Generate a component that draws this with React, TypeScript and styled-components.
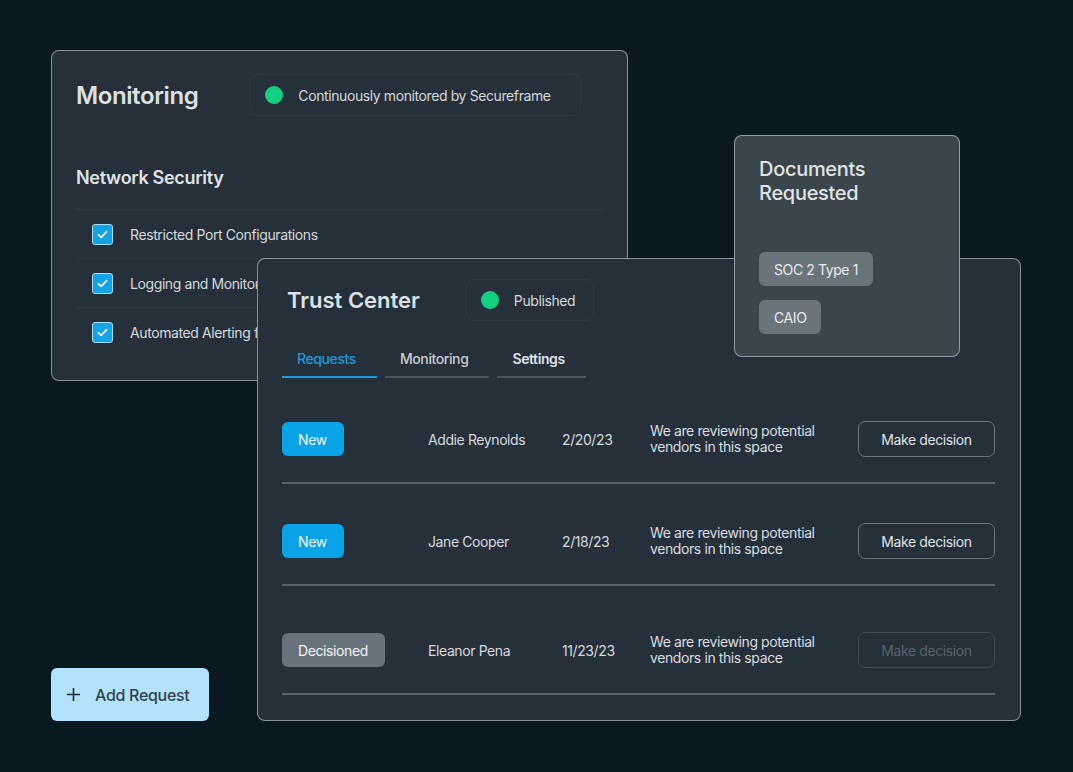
import React from "react";
import styled, { createGlobalStyle } from "styled-components";

const Global = createGlobalStyle`
  html, body { margin: 0; padding: 0; background: #0a1820; }
  body { font-family: Inter, "Noto Sans", "Liberation Sans", sans-serif; -webkit-font-smoothing: antialiased; }
  * { box-sizing: border-box; }
`;

const Canvas = styled.div`
  position: relative;
  width: 1073px;
  height: 772px;
  overflow: hidden;
  background: #0a1820;
  letter-spacing: -0.4px;
`;

const Window = styled.section<{ $x: number; $y: number; $w: number; $h: number; $bg?: string }>`
  position: absolute;
  left: ${(p) => p.$x}px;
  top: ${(p) => p.$y}px;
  width: ${(p) => p.$w}px;
  height: ${(p) => p.$h}px;
  background: ${(p) => p.$bg ?? "#25303a"};
  border: 1px solid rgba(220, 228, 232, 0.55);
  border-radius: 8px;
  display: flex;
  flex-direction: column;
`;

/* ---------- Monitoring ---------- */
const MonitorBody = styled.div`
  display: flex;
  flex-direction: column;
  padding: 24px 24px 0 24px;
`;

const HeaderRow = styled.div<{ $gap: number }>`
  display: flex;
  align-items: center;
  gap: ${(p) => p.$gap}px;
  height: 40px;
`;

const Title = styled.h1<{ $size: number; $track: number }>`
  margin: 0;
  font-size: ${(p) => p.$size}px;
  font-weight: 600;
  letter-spacing: ${(p) => p.$track}px;
  color: #dde1e4;
`;

const StatusPill = styled.div<{ $w: number }>`
  display: flex;
  align-items: center;
  gap: 15px;
  width: ${(p) => p.$w}px;
  height: 42px;
  padding: 0 14px;
  border: 1px solid rgba(255, 255, 255, 0.035);
  border-radius: 8px;
  font-size: 14px;
  color: #d3d8db;
`;

const Dot = styled.span`
  width: 18px;
  height: 18px;
  border-radius: 50%;
  background: #12cf82;
  flex: none;
`;

const SectionTitle = styled.h2`
  margin: 52px 0 0 0;
  font-size: 18px;
  line-height: 22px;
  font-weight: 600;
  letter-spacing: -0.3px;
  color: #dfe3e6;
`;

const CheckList = styled.ul`
  list-style: none;
  margin: 20px 0 0 0;
  padding: 0;
`;

const CheckRow = styled.li`
  display: flex;
  align-items: center;
  gap: 17px;
  height: 49px;
  padding-left: 16px;
  border-top: 1px solid rgba(255, 255, 255, 0.035);
  font-size: 14px;
  color: #d6dadd;
`;

const Box = styled.span`
  width: 21px;
  height: 21px;
  border-radius: 3px;
  background: #14a3e6;
  border: 1px solid #a9dcf5;
  display: flex;
  align-items: center;
  justify-content: center;
  flex: none;
`;

/* ---------- Trust Center ---------- */
const TrustBody = styled.div`
  display: flex;
  flex-direction: column;
  padding: 0 25px 0 24px;
`;

const TrustHeader = styled(HeaderRow)`
  margin-top: 21px;
  padding-left: 5px;
`;

const Tabs = styled.nav`
  display: flex;
  gap: 8px;
  margin-top: 20px;
`;

const Tab = styled.div<{ $active?: boolean; $strong?: boolean }>`
  padding: 0 21px 0 15px;
  height: 38px;
  display: flex;
  align-items: center;
  font-size: 14px;
  font-weight: ${(p) => (p.$strong ? 600 : 500)};
  color: ${(p) => (p.$active ? "#1d9bd8" : p.$strong ? "#dfe3e6" : "#c9ced2")};
  border-bottom: 2px solid ${(p) => (p.$active ? "#1d9bd8" : "#4b555d")};
`;

const Row = styled.div<{ $top: number }>`
  display: grid;
  grid-template-columns: 146px 134px 88px 208px 137px;
  align-items: center;
  padding: ${(p) => p.$top}px 0 25px 0;
  border-bottom: 2px solid #58626a;
  font-size: 14px;
  color: #d6dadd;
`;

const Badge = styled.span<{ $tone: "new" | "done" }>`
  justify-self: start;
  height: 34px;
  padding: 0 17px 0 16px;
  display: flex;
  align-items: center;
  border-radius: 6px;
  font-size: 14px;
  color: #f2f6f8;
  background: ${(p) => (p.$tone === "new" ? "#0aa3e8" : "#69737b")};
`;

const Cell = styled.span`
  white-space: nowrap;
`;

const Desc = styled.span`
  line-height: 16px;
  color: #d9dde0;
`;

const DecisionButton = styled.button<{ $disabled?: boolean }>`
  height: 36px;
  border-radius: 7px;
  background: transparent;
  border: 1px solid ${(p) => (p.$disabled ? "#3e4951" : "#6a747c")};
  color: ${(p) => (p.$disabled ? "#59636b" : "#dfe3e6")};
  font-family: inherit;
  font-size: 14px;
  letter-spacing: -0.4px;
  padding: 0;
`;

/* ---------- Documents ---------- */
const DocBody = styled.div`
  display: flex;
  flex-direction: column;
  align-items: flex-start;
  padding: 21px 24px 0 24px;
`;

const DocTitle = styled.h3`
  margin: 0;
  font-size: 20px;
  line-height: 24px;
  font-weight: 500;
  letter-spacing: -0.3px;
  color: #dfe3e5;
`;

const Chips = styled.div`
  display: flex;
  flex-direction: column;
  align-items: flex-start;
  gap: 14px;
  margin-top: 47px;
`;

const Chip = styled.span`
  height: 34px;
  padding: 0 15px;
  display: flex;
  align-items: center;
  border-radius: 6px;
  background: #6a747b;
  color: #e9ecee;
  font-size: 14px;
`;

/* ---------- Add request ---------- */
const AddButton = styled.button`
  position: absolute;
  left: 51px;
  top: 668px;
  width: 158px;
  height: 53px;
  border: none;
  border-radius: 6px;
  background: #b3e3fc;
  display: flex;
  align-items: center;
  gap: 14px;
  padding: 0 0 0 15px;
  font-family: inherit;
  font-size: 16px;
  font-weight: 500;
  letter-spacing: -0.3px;
  color: #33434d;
`;

const Check = () => (
  <svg width="13" height="13" viewBox="0 0 13 13" fill="none">
    <path d="M2.5 6.8 L5.2 9.4 L10.6 3.6" stroke="#fff" strokeWidth="1.6" strokeLinecap="round" strokeLinejoin="round" />
  </svg>
);

const Plus = () => (
  <svg width="15" height="15" viewBox="0 0 15 15" fill="none">
    <path d="M7.5 1 V14 M1 7.5 H14" stroke="#1c2a33" strokeWidth="1.6" />
  </svg>
);

const checks = ["Restricted Port Configurations", "Logging and Monitoring", "Automated Alerting for Anomalies"];

const requests = [
  { status: "New", tone: "new" as const, name: "Addie Reynolds", date: "2/20/23", top: 43, disabled: false },
  { status: "New", tone: "new" as const, name: "Jane Cooper", date: "2/18/23", top: 39, disabled: false },
  { status: "Decisioned", tone: "done" as const, name: "Eleanor Pena", date: "11/23/23", top: 46, disabled: true },
];

export default function App() {
  return (
    <>
      <Global />
      <Canvas>
        <Window $x={51} $y={50} $w={577} $h={331}>
          <MonitorBody>
            <HeaderRow $gap={52}>
              <Title $size={24} $track={-0.4}>Monitoring</Title>
              <StatusPill $w={331}>
                <Dot />
                Continuously monitored by Secureframe
              </StatusPill>
            </HeaderRow>
            <SectionTitle>Network Security</SectionTitle>
            <CheckList>
              {checks.map((c) => (
                <CheckRow key={c}>
                  <Box>
                    <Check />
                  </Box>
                  {c}
                </CheckRow>
              ))}
            </CheckList>
          </MonitorBody>
        </Window>

        <Window $x={257} $y={258} $w={764} $h={463}>
          <TrustBody>
            <TrustHeader $gap={46}>
              <Title $size={22} $track={0}>Trust Center</Title>
              <StatusPill $w={128}>
                <Dot />
                Published
              </StatusPill>
            </TrustHeader>
            <Tabs>
              <Tab $active>Requests</Tab>
              <Tab>Monitoring</Tab>
              <Tab $strong>Settings</Tab>
            </Tabs>
            {requests.map((r) => (
              <Row key={r.name} $top={r.top}>
                <Badge $tone={r.tone}>{r.status}</Badge>
                <Cell>{r.name}</Cell>
                <Cell>{r.date}</Cell>
                <Desc>
                  We are reviewing potential
                  <br />
                  vendors in this space
                </Desc>
                <DecisionButton $disabled={r.disabled}>Make decision</DecisionButton>
              </Row>
            ))}
          </TrustBody>
        </Window>

        <Window $x={734} $y={135} $w={226} $h={222} $bg="#3a454c">
          <DocBody>
            <DocTitle>
              Documents
              <br />
              Requested
            </DocTitle>
            <Chips>
              <Chip>SOC 2 Type 1</Chip>
              <Chip>CAIO</Chip>
            </Chips>
          </DocBody>
        </Window>

        <AddButton>
          <Plus />
          Add Request
        </AddButton>
      </Canvas>
    </>
  );
}
